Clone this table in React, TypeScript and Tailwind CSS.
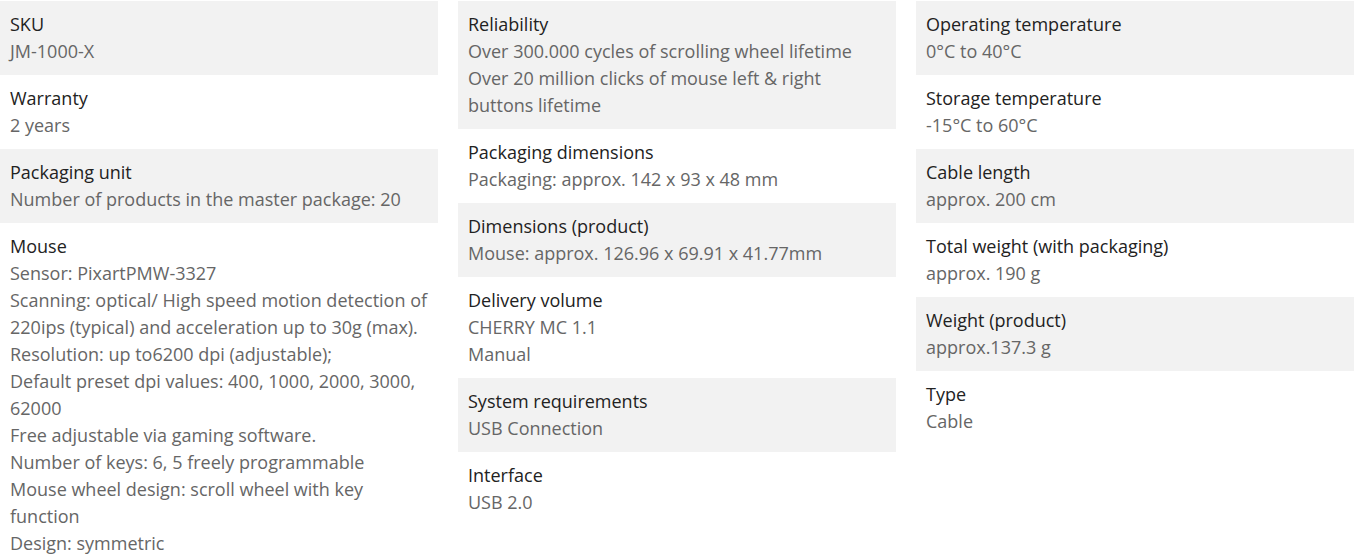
import React from 'react';

type Spec = { label: string; lines: string[] };

const columns: Spec[][] = [
  [
    { label: 'SKU', lines: ['JM-1000-X'] },
    { label: 'Warranty', lines: ['2 years'] },
    { label: 'Packaging unit', lines: ['Number of products in the master package: 20'] },
    {
      label: 'Mouse',
      lines: [
        'Sensor: PixartPMW-3327',
        'Scanning: optical/ High speed motion detection of 220ips (typical) and acceleration up to 30g (max).',
        'Resolution: up to6200 dpi (adjustable);',
        'Default preset dpi values: 400, 1000, 2000, 3000, 62000',
        'Free adjustable via gaming software.',
        'Number of keys: 6, 5 freely programmable',
        'Mouse wheel design: scroll wheel with key function',
        'Design: symmetric',
      ],
    },
  ],
  [
    {
      label: 'Reliability',
      lines: [
        'Over 300.000 cycles of scrolling wheel lifetime',
        'Over 20 million clicks of mouse left & right buttons lifetime',
      ],
    },
    { label: 'Packaging dimensions', lines: ['Packaging: approx. 142 x 93 x 48 mm'] },
    { label: 'Dimensions (product)', lines: ['Mouse: approx. 126.96 x 69.91 x 41.77mm'] },
    { label: 'Delivery volume', lines: ['CHERRY MC 1.1', 'Manual'] },
    { label: 'System requirements', lines: ['USB Connection'] },
    { label: 'Interface', lines: ['USB 2.0'] },
  ],
  [
    { label: 'Operating temperature', lines: ['0°C to 40°C'] },
    { label: 'Storage temperature', lines: ['-15°C to 60°C'] },
    { label: 'Cable length', lines: ['approx. 200 cm'] },
    { label: 'Total weight (with packaging)', lines: ['approx. 190 g'] },
    { label: 'Weight (product)', lines: ['approx.137.3 g'] },
    { label: 'Type', lines: ['Cable'] },
  ],
];

const App: React.FC = () => {
  return (
    <div className="bg-white pt-px font-['Open_Sans',sans-serif] text-[18px] leading-[27px] antialiased">
      <div className="grid grid-cols-[438px_438px_438px] gap-x-5 items-start">
        {columns.map((col, ci) => (
          <div key={ci} className="flex flex-col">
            {col.map((spec, i) => (
              <div
                key={spec.label}
                className={`px-2.5 py-2.5 ${i % 2 === 0 ? 'bg-[#f2f2f2]' : 'bg-white'}`}
              >
                <div className="text-[#222]">{spec.label}</div>
                {spec.lines.map((line) => (
                  <div key={line} className="text-[#666]">
                    {line}
                  </div>
                ))}
              </div>
            ))}
          </div>
        ))}
      </div>
    </div>
  );
};

export default App;
